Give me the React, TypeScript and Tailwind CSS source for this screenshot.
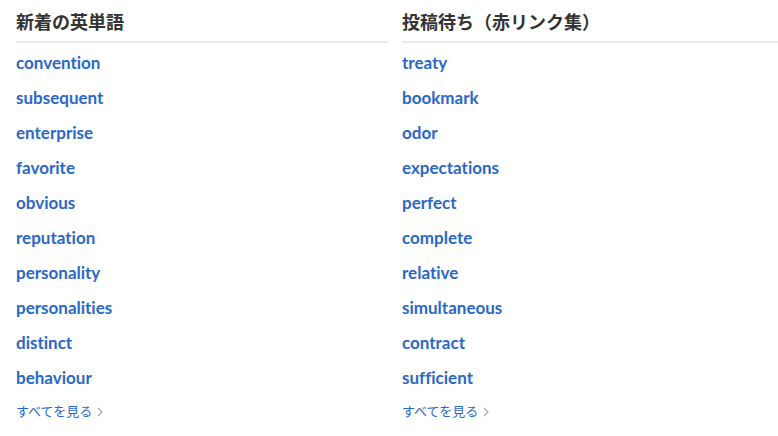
const newWords = [
  "convention",
  "subsequent",
  "enterprise",
  "favorite",
  "obvious",
  "reputation",
  "personality",
  "personalities",
  "distinct",
  "behaviour",
];

const redLinks = [
  "treaty",
  "bookmark",
  "odor",
  "expectations",
  "perfect",
  "complete",
  "relative",
  "simultaneous",
  "contract",
  "sufficient",
];

function WordColumn({ title, words, className }: { title: string; words: string[]; className: string }) {
  return (
    <section className={className}>
      <h2 className="text-[18px] font-bold text-[#333] leading-[24px] pt-[10px] pb-[7px] border-b-2 border-[#ebebeb]">
        {title}
      </h2>
      <ul className="pt-[2px]">
        {words.map((w) => (
          <li key={w} className="h-[35px] flex items-center">
            <a href="#" className="text-[17px] font-bold text-[#2a68c8] leading-none [font-variant-ligatures:none]">
              {w}
            </a>
          </li>
        ))}
      </ul>
      <a href="#" className="mt-[7px] flex items-center gap-[5px] text-[13px] text-[#2a68c8]">
        すべてを見る
        <svg width="6" height="10" viewBox="0 0 6 10" className="mt-[1px]">
          <path d="M1 1l4 4-4 4" fill="none" stroke="#aaa" strokeWidth="1.2" />
        </svg>
      </a>
    </section>
  );
}

export default function App() {
  return (
    <div
      className="w-[778px] h-[436px] bg-white flex gap-[14px] pl-[16px] overflow-hidden"
      style={{ fontFamily: 'Lato, "Noto Sans CJK JP", sans-serif' }}
    >
      <WordColumn title="新着の英単語" words={newWords} className="w-[372px] shrink-0" />
      <WordColumn title="投稿待ち（赤リンク集）" words={redLinks} className="flex-1 min-w-0" />
    </div>
  );
}
